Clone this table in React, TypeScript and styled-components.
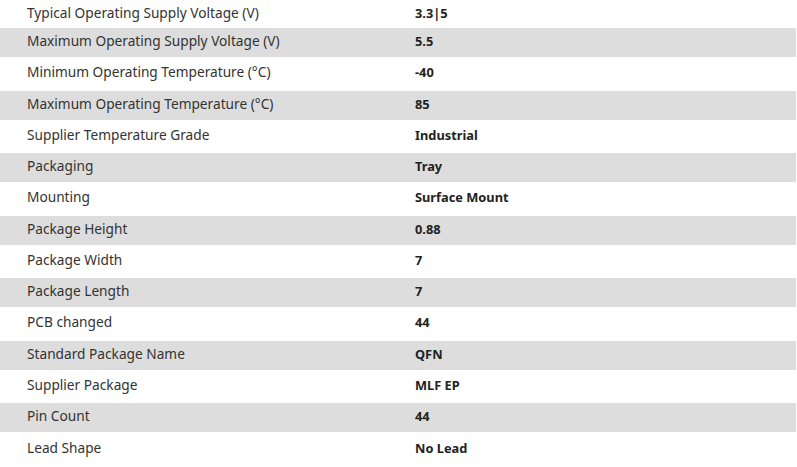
import React from "react";
import styled, { createGlobalStyle } from "styled-components";

const Global = createGlobalStyle`
  html, body { margin: 0; padding: 0; background: #fff; }
  body { font-family: "Noto Sans", "Open Sans", sans-serif; }
`;

const Table = styled.div`
  display: flex;
  flex-direction: column;
  width: 797px;
  height: 467px;
  overflow: hidden;
`;

const Row = styled.div<{ $striped: boolean; $h: number }>`
  display: grid;
  grid-template-columns: 415px 1fr;
  align-items: center;
  box-sizing: border-box;
  padding-bottom: 3px;
  height: ${(p) => p.$h}px;
  flex: none;
  background: ${(p) => (p.$striped ? "#dddddd" : "#ffffff")};
  margin-right: ${(p) => (p.$striped ? "1px" : "0")};
`;

const Label = styled.div`
  padding-left: 27px;
  font-size: 13.7px;
  line-height: 16px;
  color: #333333;
  white-space: nowrap;
`;

const Value = styled.div`
  font-size: 12.8px;
  line-height: 16px;
  font-weight: 700;
  color: #222222;
  white-space: nowrap;
`;

const rows: [string, string][] = [
  ["Typical Operating Supply Voltage (V)", "3.3|5"],
  ["Maximum Operating Supply Voltage (V)", "5.5"],
  ["Minimum Operating Temperature (°C)", "-40"],
  ["Maximum Operating Temperature (°C)", "85"],
  ["Supplier Temperature Grade", "Industrial"],
  ["Packaging", "Tray"],
  ["Mounting", "Surface Mount"],
  ["Package Height", "0.88"],
  ["Package Width", "7"],
  ["Package Length", "7"],
  ["PCB changed", "44"],
  ["Standard Package Name", "QFN"],
  ["Supplier Package", "MLF EP"],
  ["Pin Count", "44"],
  ["Lead Shape", "No Lead"],
];

function heightFor(i: number): number {
  if (i === 0) return 28;
  if (i === rows.length - 1) return 35;
  if (i % 2 === 1) return 29;
  return 33.5;
}

export default function App() {
  return (
    <>
      <Global />
      <Table>
        {rows.map(([k, v], i) => (
          <Row key={k} $striped={i % 2 === 1} $h={heightFor(i)}>
            <Label>{k}</Label>
            <Value>{v}</Value>
          </Row>
        ))}
      </Table>
    </>
  );
}
